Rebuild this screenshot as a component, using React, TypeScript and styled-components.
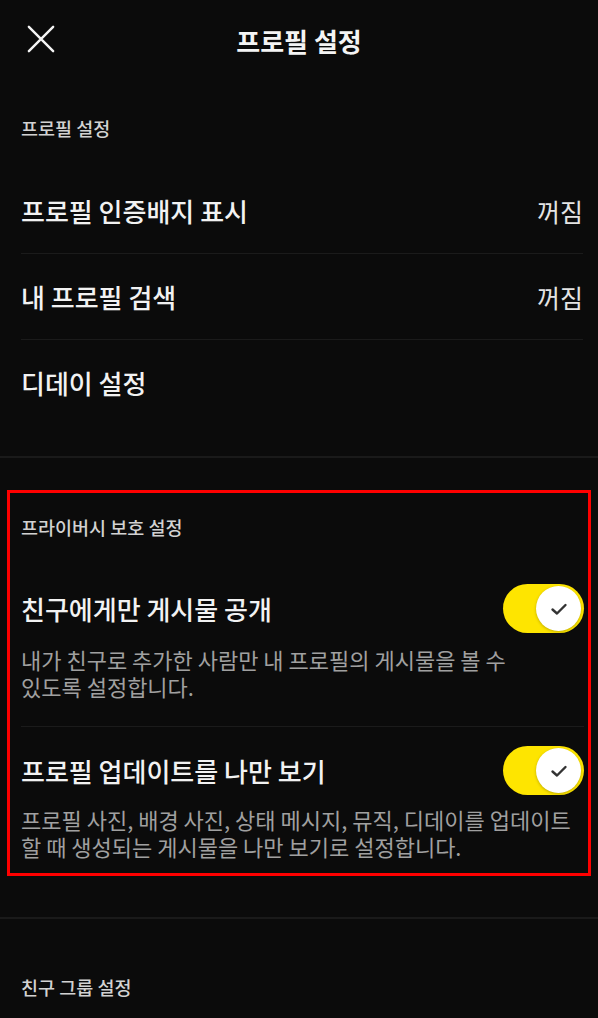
import styled, { createGlobalStyle } from 'styled-components';

const GlobalStyle = createGlobalStyle`
    html, body {
        margin: 0;
        padding: 0;
        background: #0b0b0b;
    }
    body {
        font-family: "Noto Sans CJK KR", "Noto Sans", sans-serif;
        color: #f2f2f2;
        -webkit-font-smoothing: antialiased;
    }
    * {
        box-sizing: border-box;
    }
`

const Page = styled.div`
    width: 598px;
    min-height: 1018px;
    background: #0b0b0b;
    overflow: hidden;
`

const Header = styled.header`
    position: relative;
    height: 80px;
    display: flex;
    align-items: center;
    justify-content: center;
`

const CloseButton = styled.button`
    position: absolute;
    left: 23px;
    top: 21px;
    width: 36px;
    height: 36px;
    padding: 4px;
    border: none;
    background: none;
    display: flex;
    align-items: center;
    justify-content: center;
`

const Title = styled.h1`
    margin: 0;
    font-size: 26px;
    font-weight: 700;
    color: #f4f4f4;
`

const SectionLabel = styled.div<{ $height: number; $top?: number }>`
    height: ${(p) => p.$height}px;
    padding: ${(p) => p.$top || 0}px 0 0;
    display: flex;
    align-items: center;
    font-size: 18.5px;
    font-weight: 500;
    color: #d2d2d2;
`

const Group = styled.section`
    padding: 0 15px 0 21px;
`

const Row = styled.div<{ $last?: boolean }>`
    height: 86px;
    display: flex;
    align-items: center;
    justify-content: space-between;
    border-bottom: 1px solid ${(p) => (p.$last ? 'transparent' : '#1b1b1b')};
`

const RowTitle = styled.div`
    font-size: 26px;
    font-weight: 500;
    color: #f2f2f2;
`

const RowValue = styled.div`
    font-size: 25px;
    font-weight: 400;
    color: #e4e4e4;
`

const Separator = styled.div<{ $top: number }>`
    margin-top: ${(p) => p.$top}px;
    height: 2px;
    background: #1a1a1a;
`

const Highlight = styled.section`
    margin: 32px 7px 0;
    border: 3px solid #ff0000;
    padding: 0 4px 0 11px;
`

const ToggleItem = styled.div<{ $last?: boolean }>`
    padding: ${(p) => (p.$last ? '19px 0 12px' : '23px 0 26px')};
    border-bottom: 1px solid ${(p) => (p.$last ? 'transparent' : '#1b1b1b')};
`

const ToggleHead = styled.div`
    height: 49px;
    display: flex;
    align-items: center;
    justify-content: space-between;
`

const Description = styled.p<{ $gap: number }>`
    margin: ${(p) => p.$gap}px 0 0;
    font-size: 22px;
    line-height: 27px;
    color: #a0a0a0;
    white-space: nowrap;
`

const Track = styled.div`
    width: 81px;
    height: 49px;
    border-radius: 25px;
    background: #fee500;
    padding: 2px 3px 2px 0;
    display: flex;
    justify-content: flex-end;
    align-items: center;
`

const Knob = styled.div`
    width: 45px;
    height: 45px;
    border-radius: 50%;
    background: #ffffff;
    box-shadow: 0 1px 3px rgba(0, 0, 0, 0.25);
    display: flex;
    align-items: center;
    justify-content: center;
`

const Toggle = () => (
    <Track>
        <Knob>
            <svg width="18" height="14" viewBox="0 0 18 14">
                <path d="M2.5 7.5 L7 11.5 L15.5 3" fill="none" stroke="#333" strokeWidth="2.4" strokeLinecap="round" strokeLinejoin="round" />
            </svg>
        </Knob>
    </Track>
)

const profileRows = [
    { title: '프로필 인증배지 표시', value: '꺼짐' },
    { title: '내 프로필 검색', value: '꺼짐' },
    { title: '디데이 설정', value: '' },
]

const App = () => {
    return (
        <Page>
            <GlobalStyle />
            <Header>
                <CloseButton aria-label="닫기">
                    <svg width="30" height="30" viewBox="0 0 30 30">
                        <path d="M2 2 L28 28 M28 2 L2 28" stroke="#f4f4f4" strokeWidth="2.6" strokeLinecap="round" />
                    </svg>
                </CloseButton>
                <Title>프로필 설정</Title>
            </Header>

            <Group>
                <SectionLabel $height={88} $top={8}>프로필 설정</SectionLabel>
                {profileRows.map((row, i) => (
                    <Row key={row.title} $last={i === profileRows.length - 1}>
                        <RowTitle>{row.title}</RowTitle>
                        {row.value && <RowValue>{row.value}</RowValue>}
                    </Row>
                ))}
            </Group>
            <Separator $top={30} />

            <Highlight>
                <SectionLabel $height={68}>프라이버시 보호 설정</SectionLabel>
                <ToggleItem>
                    <ToggleHead>
                        <RowTitle>친구에게만 게시물 공개</RowTitle>
                        <Toggle />
                    </ToggleHead>
                    <Description $gap={13}>
                        내가 친구로 추가한 사람만 내 프로필의 게시물을 볼 수<br />
                        있도록 설정합니다.
                    </Description>
                </ToggleItem>
                <ToggleItem $last>
                    <ToggleHead>
                        <RowTitle>프로필 업데이트를 나만 보기</RowTitle>
                        <Toggle />
                    </ToggleHead>
                    <Description $gap={11}>
                        프로필 사진, 배경 사진, 상태 메시지, 뮤직, 디데이를 업데이트<br />
                        할 때 생성되는 게시물을 나만 보기로 설정합니다.
                    </Description>
                </ToggleItem>
            </Highlight>
            <Separator $top={41} />

            <Group>
                <SectionLabel $height={136}>친구 그룹 설정</SectionLabel>
            </Group>
        </Page>
    )
}

export default App;
